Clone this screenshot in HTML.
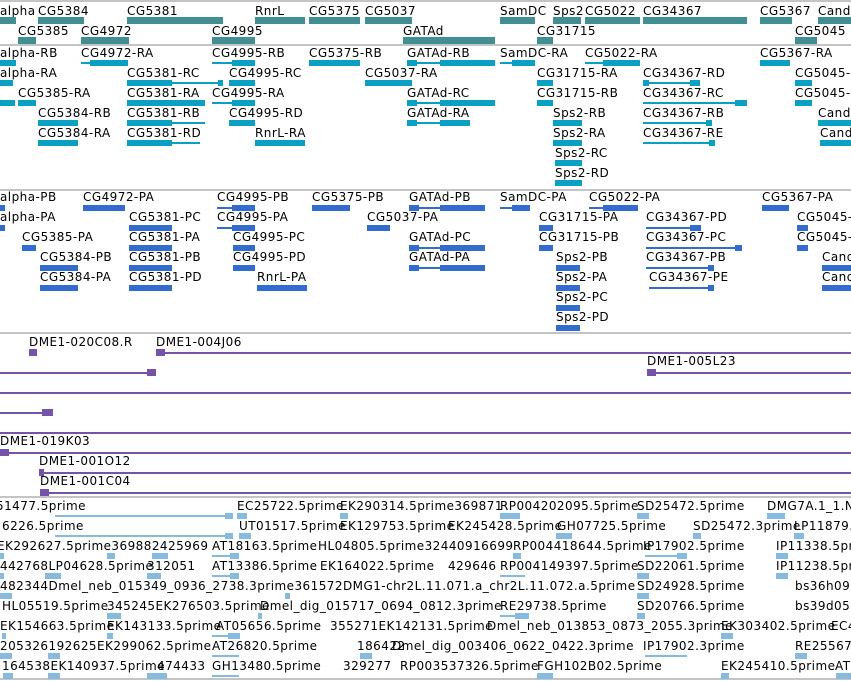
<!DOCTYPE html>
<html><head><meta charset="utf-8"><style>
html,body{margin:0;padding:0;background:#fff;width:851px;height:681px;overflow:hidden;position:relative}
.l{position:absolute;font-family:"DejaVu Sans","Liberation Sans",sans-serif;font-size:12px;letter-spacing:0.45px;line-height:14px;color:#000;white-space:nowrap}
.h{position:absolute;left:0;width:851px;height:2px;background:#c4c4c4}
.g{position:absolute;height:7px;background:#418e93}
.t{position:absolute;height:6px;background:#0aa0c2}
.tl{position:absolute;height:2px;background:#0aa0c2}
.p{position:absolute;height:6px;background:#336ccf}
.pl{position:absolute;height:2px;background:#336ccf}
.d{position:absolute;height:2px;background:#7453a9}
.dh{position:absolute;height:7px;width:9px;background:#7453a9}
.e{position:absolute;height:6px;background:#86bbdf}
.el{position:absolute;height:2px;background:#86bbdf}
</style></head><body>
<div class="h" style="top:0"></div>
<div class="h" style="top:44px"></div>
<div class="h" style="top:189px"></div>
<div class="h" style="top:332px"></div>
<div class="h" style="top:496px"></div>
<div class="h" style="top:678px"></div>

<!-- genes -->
<div class="l" style="left:0;top:4px">alpha</div><div class="g" style="left:0;top:17px;width:16px"></div>
<div class="l" style="left:38px;top:4px">CG5384</div><div class="g" style="left:38px;top:17px;width:46px"></div>
<div class="l" style="left:127px;top:4px">CG5381</div><div class="g" style="left:127px;top:17px;width:96px"></div>
<div class="l" style="left:255px;top:4px">RnrL</div><div class="g" style="left:255px;top:17px;width:50px"></div>
<div class="l" style="left:309px;top:4px">CG5375</div><div class="g" style="left:309px;top:17px;width:51px"></div>
<div class="l" style="left:365px;top:4px">CG5037</div><div class="g" style="left:365px;top:17px;width:47px"></div>
<div class="l" style="left:500px;top:4px">SamDC</div><div class="g" style="left:500px;top:17px;width:35px"></div>
<div class="l" style="left:553px;top:4px">Sps2</div><div class="g" style="left:553px;top:17px;width:28px"></div>
<div class="l" style="left:585px;top:4px">CG5022</div><div class="g" style="left:585px;top:17px;width:55px"></div>
<div class="l" style="left:643px;top:4px">CG34367</div><div class="g" style="left:643px;top:17px;width:104px"></div>
<div class="l" style="left:760px;top:4px">CG5367</div><div class="g" style="left:760px;top:17px;width:32px"></div>
<div class="l" style="left:818px;top:4px">Cand1</div><div class="g" style="left:818px;top:17px;width:33px"></div>
<div class="l" style="left:18px;top:24px">CG5385</div><div class="g" style="left:18px;top:37px;width:18px"></div>
<div class="l" style="left:81px;top:24px">CG4972</div><div class="g" style="left:81px;top:37px;width:48px"></div>
<div class="l" style="left:212px;top:24px">CG4995</div><div class="g" style="left:212px;top:37px;width:43px"></div>
<div class="l" style="left:403px;top:24px">GATAd</div><div class="g" style="left:403px;top:37px;width:92px"></div>
<div class="l" style="left:537px;top:24px">CG31715</div><div class="g" style="left:537px;top:37px;width:16px"></div>
<div class="l" style="left:795px;top:24px">CG5045</div><div class="g" style="left:795px;top:37px;width:22px"></div>

<!-- transcripts -->
<div class="l" style="left:0;top:46px">alpha-RB</div><div class="t" style="left:0;top:60px;width:16px"></div>
<div class="l" style="left:81px;top:46px">CG4972-RA</div><div class="tl" style="left:81px;top:62px;width:47px"></div><div class="t" style="left:90px;top:60px;width:38px"></div>
<div class="l" style="left:212px;top:46px">CG4995-RB</div><div class="tl" style="left:212px;top:62px;width:43px"></div><div class="t" style="left:232px;top:60px;width:23px"></div>
<div class="l" style="left:309px;top:46px">CG5375-RB</div><div class="t" style="left:309px;top:60px;width:51px"></div>
<div class="l" style="left:407px;top:46px">GATAd-RB</div><div class="tl" style="left:407px;top:62px;width:88px"></div><div class="t" style="left:407px;top:60px;width:10px"></div><div class="t" style="left:440px;top:60px;width:55px"></div>
<div class="l" style="left:500px;top:46px">SamDC-RA</div><div class="tl" style="left:500px;top:62px;width:35px"></div><div class="t" style="left:512px;top:60px;width:23px"></div>
<div class="l" style="left:585px;top:46px">CG5022-RA</div><div class="tl" style="left:585px;top:62px;width:55px"></div><div class="t" style="left:603px;top:60px;width:37px"></div>
<div class="l" style="left:760px;top:46px">CG5367-RA</div><div class="t" style="left:760px;top:60px;width:30px"></div>

<div class="l" style="left:0;top:66px">alpha-RA</div><div class="t" style="left:0;top:80px;width:13px"></div>
<div class="l" style="left:127px;top:66px">CG5381-RC</div><div class="tl" style="left:127px;top:82px;width:95px"></div><div class="t" style="left:127px;top:80px;width:45px"></div><div class="t" style="left:218px;top:80px;width:5px"></div>
<div class="l" style="left:229px;top:66px">CG4995-RC</div><div class="t" style="left:229px;top:80px;width:26px"></div>
<div class="l" style="left:365px;top:66px">CG5037-RA</div><div class="t" style="left:365px;top:80px;width:47px"></div>
<div class="l" style="left:537px;top:66px">CG31715-RA</div><div class="t" style="left:537px;top:80px;width:16px"></div>
<div class="l" style="left:643px;top:66px">CG34367-RD</div><div class="tl" style="left:643px;top:82px;width:57px"></div><div class="t" style="left:643px;top:80px;width:6px"></div><div class="t" style="left:690px;top:80px;width:10px"></div>
<div class="l" style="left:795px;top:66px">CG5045-RA</div><div class="t" style="left:795px;top:80px;width:17px"></div>

<div class="t" style="left:0;top:100px;width:15px"></div>
<div class="l" style="left:18px;top:86px">CG5385-RA</div><div class="t" style="left:18px;top:100px;width:18px"></div>
<div class="l" style="left:127px;top:86px">CG5381-RA</div><div class="t" style="left:127px;top:100px;width:78px"></div>
<div class="l" style="left:212px;top:86px">CG4995-RA</div><div class="tl" style="left:212px;top:102px;width:43px"></div><div class="t" style="left:232px;top:100px;width:23px"></div>
<div class="l" style="left:407px;top:86px">GATAd-RC</div><div class="tl" style="left:407px;top:102px;width:88px"></div><div class="t" style="left:407px;top:100px;width:10px"></div><div class="t" style="left:440px;top:100px;width:55px"></div>
<div class="l" style="left:537px;top:86px">CG31715-RB</div><div class="t" style="left:537px;top:100px;width:16px"></div>
<div class="l" style="left:643px;top:86px">CG34367-RC</div><div class="tl" style="left:643px;top:102px;width:104px"></div><div class="t" style="left:735px;top:100px;width:12px"></div>
<div class="l" style="left:795px;top:86px">CG5045-RB</div><div class="t" style="left:795px;top:100px;width:17px"></div>

<div class="l" style="left:38px;top:106px">CG5384-RB</div><div class="t" style="left:38px;top:120px;width:40px"></div>
<div class="l" style="left:127px;top:106px">CG5381-RB</div><div class="tl" style="left:127px;top:122px;width:78px"></div><div class="t" style="left:127px;top:120px;width:45px"></div>
<div class="l" style="left:229px;top:106px">CG4995-RD</div><div class="t" style="left:229px;top:120px;width:26px"></div>
<div class="l" style="left:407px;top:106px">GATAd-RA</div><div class="tl" style="left:407px;top:122px;width:63px"></div><div class="t" style="left:407px;top:120px;width:10px"></div><div class="t" style="left:440px;top:120px;width:30px"></div>
<div class="l" style="left:553px;top:106px">Sps2-RB</div><div class="t" style="left:553px;top:120px;width:29px"></div>
<div class="l" style="left:643px;top:106px">CG34367-RB</div><div class="tl" style="left:643px;top:122px;width:69px"></div><div class="t" style="left:706px;top:120px;width:6px"></div>
<div class="l" style="left:818px;top:106px">Cand1-RA</div><div class="t" style="left:818px;top:120px;width:33px"></div>

<div class="l" style="left:38px;top:126px">CG5384-RA</div><div class="t" style="left:38px;top:140px;width:40px"></div>
<div class="l" style="left:127px;top:126px">CG5381-RD</div><div class="tl" style="left:127px;top:142px;width:73px"></div><div class="t" style="left:127px;top:140px;width:45px"></div>
<div class="l" style="left:255px;top:126px">RnrL-RA</div><div class="t" style="left:255px;top:140px;width:50px"></div>
<div class="l" style="left:553px;top:126px">Sps2-RA</div><div class="t" style="left:553px;top:140px;width:29px"></div>
<div class="l" style="left:643px;top:126px">CG34367-RE</div><div class="tl" style="left:643px;top:142px;width:72px"></div><div class="t" style="left:709px;top:140px;width:6px"></div>
<div class="l" style="left:820px;top:126px">Cand1-RB</div><div class="t" style="left:820px;top:140px;width:31px"></div>
<div class="l" style="left:555px;top:146px">Sps2-RC</div><div class="t" style="left:555px;top:160px;width:27px"></div>
<div class="l" style="left:555px;top:166px">Sps2-RD</div><div class="t" style="left:555px;top:180px;width:27px"></div>

<!-- proteins -->
<div class="l" style="left:0;top:190px">alpha-PB</div><div class="p" style="left:0;top:205px;width:5px"></div>
<div class="l" style="left:83px;top:190px">CG4972-PA</div><div class="p" style="left:83px;top:205px;width:42px"></div>
<div class="l" style="left:217px;top:190px">CG4995-PB</div><div class="pl" style="left:217px;top:207px;width:38px"></div><div class="p" style="left:232px;top:205px;width:23px"></div>
<div class="l" style="left:312px;top:190px">CG5375-PB</div><div class="p" style="left:312px;top:205px;width:38px"></div>
<div class="l" style="left:409px;top:190px">GATAd-PB</div><div class="pl" style="left:409px;top:207px;width:76px"></div><div class="p" style="left:409px;top:205px;width:10px"></div><div class="p" style="left:440px;top:205px;width:45px"></div>
<div class="l" style="left:500px;top:190px">SamDC-PA</div><div class="pl" style="left:500px;top:207px;width:30px"></div><div class="p" style="left:512px;top:205px;width:18px"></div>
<div class="l" style="left:589px;top:190px">CG5022-PA</div><div class="pl" style="left:589px;top:207px;width:49px"></div><div class="p" style="left:603px;top:205px;width:35px"></div>
<div class="l" style="left:762px;top:190px">CG5367-PA</div><div class="p" style="left:762px;top:205px;width:27px"></div>

<div class="l" style="left:0;top:210px">alpha-PA</div><div class="p" style="left:0;top:225px;width:5px"></div>
<div class="l" style="left:129px;top:210px">CG5381-PC</div><div class="p" style="left:129px;top:225px;width:43px"></div>
<div class="l" style="left:217px;top:210px">CG4995-PA</div><div class="pl" style="left:217px;top:227px;width:38px"></div><div class="p" style="left:232px;top:225px;width:23px"></div>
<div class="l" style="left:367px;top:210px">CG5037-PA</div><div class="p" style="left:367px;top:225px;width:23px"></div>
<div class="l" style="left:539px;top:210px">CG31715-PA</div><div class="p" style="left:539px;top:225px;width:14px"></div>
<div class="l" style="left:646px;top:210px">CG34367-PD</div><div class="pl" style="left:646px;top:227px;width:55px"></div><div class="p" style="left:690px;top:225px;width:11px"></div>
<div class="l" style="left:797px;top:210px">CG5045-PA</div><div class="p" style="left:797px;top:225px;width:11px"></div>

<div class="l" style="left:22px;top:230px">CG5385-PA</div><div class="p" style="left:22px;top:245px;width:14px"></div>
<div class="l" style="left:129px;top:230px">CG5381-PA</div><div class="p" style="left:129px;top:245px;width:43px"></div>
<div class="l" style="left:233px;top:230px">CG4995-PC</div><div class="p" style="left:233px;top:245px;width:22px"></div>
<div class="l" style="left:409px;top:230px">GATAd-PC</div><div class="pl" style="left:409px;top:247px;width:76px"></div><div class="p" style="left:409px;top:245px;width:10px"></div><div class="p" style="left:440px;top:245px;width:45px"></div>
<div class="l" style="left:539px;top:230px">CG31715-PB</div><div class="p" style="left:539px;top:245px;width:14px"></div>
<div class="l" style="left:646px;top:230px">CG34367-PC</div><div class="pl" style="left:646px;top:247px;width:96px"></div><div class="p" style="left:735px;top:245px;width:7px"></div>
<div class="l" style="left:797px;top:230px">CG5045-PB</div><div class="p" style="left:797px;top:245px;width:11px"></div>

<div class="l" style="left:40px;top:250px">CG5384-PB</div><div class="p" style="left:40px;top:265px;width:38px"></div>
<div class="l" style="left:129px;top:250px">CG5381-PB</div><div class="p" style="left:129px;top:265px;width:43px"></div>
<div class="l" style="left:233px;top:250px">CG4995-PD</div><div class="p" style="left:233px;top:265px;width:22px"></div>
<div class="l" style="left:409px;top:250px">GATAd-PA</div><div class="pl" style="left:409px;top:267px;width:76px"></div><div class="p" style="left:409px;top:265px;width:10px"></div><div class="p" style="left:440px;top:265px;width:45px"></div>
<div class="l" style="left:556px;top:250px">Sps2-PB</div><div class="p" style="left:556px;top:265px;width:24px"></div>
<div class="l" style="left:646px;top:250px">CG34367-PB</div><div class="pl" style="left:646px;top:267px;width:68px"></div><div class="p" style="left:708px;top:265px;width:6px"></div>
<div class="l" style="left:822px;top:250px">Cand1-PA</div><div class="p" style="left:822px;top:265px;width:29px"></div>

<div class="l" style="left:40px;top:270px">CG5384-PA</div><div class="p" style="left:40px;top:285px;width:38px"></div>
<div class="l" style="left:129px;top:270px">CG5381-PD</div><div class="p" style="left:129px;top:285px;width:43px"></div>
<div class="l" style="left:257px;top:270px">RnrL-PA</div><div class="p" style="left:257px;top:285px;width:50px"></div>
<div class="l" style="left:556px;top:270px">Sps2-PA</div><div class="p" style="left:556px;top:285px;width:24px"></div>
<div class="l" style="left:649px;top:270px">CG34367-PE</div><div class="pl" style="left:649px;top:287px;width:65px"></div><div class="p" style="left:708px;top:285px;width:6px"></div>
<div class="l" style="left:822px;top:270px">Cand1-PB</div><div class="p" style="left:822px;top:285px;width:29px"></div>
<div class="l" style="left:556px;top:290px">Sps2-PC</div><div class="p" style="left:556px;top:305px;width:24px"></div>
<div class="l" style="left:556px;top:310px">Sps2-PD</div><div class="p" style="left:556px;top:325px;width:24px"></div>

<!-- DME -->
<div class="l" style="left:29px;top:335px">DME1-020C08.R</div><div class="dh" style="left:29px;top:349px;width:8px"></div>
<div class="l" style="left:156px;top:335px">DME1-004J06</div><div class="dh" style="left:156px;top:349px"></div><div class="d" style="left:160px;top:352px;width:691px"></div>
<div class="d" style="left:0;top:372px;width:150px"></div><div class="dh" style="left:147px;top:369px"></div>
<div class="l" style="left:647px;top:354px">DME1-005L23</div><div class="dh" style="left:647px;top:369px"></div><div class="d" style="left:650px;top:372px;width:201px"></div>
<div class="d" style="left:0;top:392px;width:851px"></div>
<div class="d" style="left:0;top:412px;width:45px"></div><div class="dh" style="left:42px;top:409px;width:11px"></div>
<div class="d" style="left:0;top:432px;width:851px"></div>
<div class="l" style="left:0;top:434px">DME1-019K03</div><div class="dh" style="left:0;top:449px"></div><div class="d" style="left:0;top:452px;width:851px"></div>
<div class="l" style="left:39px;top:454px">DME1-001O12</div><div class="dh" style="left:39px;top:469px;width:5px"></div><div class="d" style="left:39px;top:472px;width:812px"></div>
<div class="l" style="left:40px;top:474px">DME1-001C04</div><div class="dh" style="left:40px;top:489px"></div><div class="d" style="left:40px;top:492px;width:811px"></div>

<!-- ESTs -->
<div class="l" style="left:-4px;top:499px">51477.5prime</div>
<div class="l" style="left:237px;top:499px">EC25722.5prime</div>
<div class="l" style="left:340px;top:499px">EK290314.5prime369871</div>
<div class="l" style="left:500px;top:499px">RP004202095.5prime</div>
<div class="l" style="left:637px;top:499px">SD25472.5prime</div>
<div class="l" style="left:767px;top:499px">DMG7A.1_1.N</div>
<div class="el" style="left:55px;top:515px;width:178px"></div><div class="e" style="left:225px;top:513px;width:8px"></div><div class="e" style="left:237px;top:513px;width:10px"></div><div class="e" style="left:500px;top:513px;width:20px"></div><div class="e" style="left:637px;top:513px;width:12px"></div><div class="e" style="left:767px;top:513px;width:18px"></div><div class="e" style="left:340px;top:513px;width:8px"></div>

<div class="l" style="left:2px;top:519px">6226.5prime</div>
<div class="l" style="left:239px;top:519px">UT01517.5prime</div>
<div class="l" style="left:340px;top:519px">EK129753.5prime</div>
<div class="l" style="left:448px;top:519px">EK245428.5prime</div>
<div class="l" style="left:557px;top:519px">GH07725.5prime</div>
<div class="l" style="left:693px;top:519px">SD25472.3prime</div>
<div class="l" style="left:794px;top:519px">LP11879.</div>
<div class="el" style="left:55px;top:535px;width:178px"></div><div class="e" style="left:225px;top:533px;width:8px"></div><div class="e" style="left:239px;top:533px;width:12px"></div><div class="e" style="left:556px;top:533px;width:16px"></div><div class="e" style="left:693px;top:533px;width:8px"></div><div class="e" style="left:794px;top:533px;width:10px"></div>

<div class="l" style="left:-3px;top:539px">EK292627.5prime369882425969</div>
<div class="l" style="left:212px;top:539px">AT18163.5prime</div>
<div class="l" style="left:318px;top:539px">HL04805.5prime32440916699</div>
<div class="l" style="left:513px;top:539px">RP004418644.5prime</div>
<div class="l" style="left:643px;top:539px">IP17902.5prime</div>
<div class="l" style="left:776px;top:539px">IP11338.5pr</div>
<div class="e" style="left:0;top:553px;width:4px"></div><div class="e" style="left:107px;top:553px;width:8px"></div><div class="e" style="left:152px;top:553px;width:16px"></div><div class="el" style="left:212px;top:555px;width:27px"></div><div class="e" style="left:230px;top:553px;width:9px"></div><div class="el" style="left:645px;top:555px;width:42px"></div><div class="e" style="left:677px;top:553px;width:10px"></div><div class="e" style="left:776px;top:553px;width:12px"></div><div class="e" style="left:513px;top:553px;width:8px"></div>

<div class="l" style="left:0;top:559px">442768LP04628.5prime</div>
<div class="l" style="left:147px;top:559px">312051</div>
<div class="l" style="left:212px;top:559px">AT13386.5prime</div>
<div class="l" style="left:320px;top:559px">EK164022.5prime</div>
<div class="l" style="left:448px;top:559px">429646</div>
<div class="l" style="left:500px;top:559px">RP004149397.5prime</div>
<div class="l" style="left:637px;top:559px">SD22061.5prime</div>
<div class="l" style="left:776px;top:559px">IP11238.5pr</div>
<div class="e" style="left:0;top:573px;width:4px"></div><div class="e" style="left:45px;top:573px;width:16px"></div><div class="e" style="left:147px;top:573px;width:14px"></div><div class="el" style="left:212px;top:575px;width:27px"></div><div class="e" style="left:230px;top:573px;width:9px"></div><div class="el" style="left:500px;top:575px;width:25px"></div><div class="e" style="left:637px;top:573px;width:12px"></div><div class="e" style="left:776px;top:573px;width:12px"></div>

<div class="l" style="left:0;top:579px">482344Dmel_neb_015349_0936_2738.3prime361572DMG1-chr2L.11.071.a_chr2L.11.072.a.5prime</div>
<div class="l" style="left:637px;top:579px">SD24928.5prime</div>
<div class="l" style="left:795px;top:579px">bs36h09.</div>
<div class="e" style="left:0;top:593px;width:12px"></div><div class="e" style="left:285px;top:593px;width:5px"></div><div class="e" style="left:637px;top:593px;width:12px"></div>

<div class="l" style="left:2px;top:599px">HL05519.5prime</div>
<div class="l" style="left:107px;top:599px">345245EK276503.5prime</div>
<div class="l" style="left:260px;top:599px">Dmel_dig_015717_0694_0812.3prime</div>
<div class="l" style="left:500px;top:599px">RE29738.5prime</div>
<div class="l" style="left:637px;top:599px">SD20766.5prime</div>
<div class="l" style="left:795px;top:599px">bs39d05.</div>
<div class="e" style="left:107px;top:613px;width:14px"></div><div class="e" style="left:258px;top:613px;width:4px"></div><div class="el" style="left:500px;top:615px;width:28px"></div><div class="e" style="left:515px;top:613px;width:14px"></div><div class="e" style="left:637px;top:613px;width:8px"></div>

<div class="l" style="left:0;top:619px">EK154663.5prime</div>
<div class="l" style="left:107px;top:619px">EK143133.5prime</div>
<div class="l" style="left:216px;top:619px">AT05656.5prime</div>
<div class="l" style="left:330px;top:619px">355271EK142131.5prime</div>
<div class="l" style="left:487px;top:619px">Dmel_neb_013853_0873_2055.3prime</div>
<div class="l" style="left:721px;top:619px">EK303402.5prime</div>
<div class="l" style="left:831px;top:619px">EC4</div>
<div class="e" style="left:2px;top:633px;width:4px"></div><div class="e" style="left:107px;top:633px;width:6px"></div><div class="el" style="left:212px;top:635px;width:28px"></div><div class="e" style="left:228px;top:633px;width:12px"></div><div class="e" style="left:721px;top:633px;width:12px"></div>

<div class="l" style="left:0;top:639px">205326192625EK299062.5prime</div>
<div class="l" style="left:212px;top:639px">AT26820.5prime</div>
<div class="l" style="left:357px;top:639px">186422</div>
<div class="l" style="left:392px;top:639px">Dmel_dig_003406_0622_0422.3prime</div>
<div class="l" style="left:643px;top:639px">IP17902.3prime</div>
<div class="l" style="left:795px;top:639px">RE25567</div>
<div class="e" style="left:0;top:653px;width:12px"></div><div class="e" style="left:48px;top:653px;width:12px"></div><div class="el" style="left:212px;top:655px;width:27px"></div><div class="el" style="left:645px;top:655px;width:42px"></div><div class="e" style="left:795px;top:653px;width:12px"></div><div class="e" style="left:360px;top:653px;width:12px"></div>

<div class="l" style="left:2px;top:659px">164538EK140937.5prime</div>
<div class="l" style="left:157px;top:659px">474433</div>
<div class="l" style="left:212px;top:659px">GH13480.5prime</div>
<div class="l" style="left:343px;top:659px">329277</div>
<div class="l" style="left:400px;top:659px">RP003537326.5prime</div>
<div class="l" style="left:537px;top:659px">FGH102B02.5prime</div>
<div class="l" style="left:721px;top:659px">EK245410.5prime</div>
<div class="l" style="left:835px;top:659px">AT</div>
<div class="e" style="left:3px;top:673px;width:10px"></div><div class="e" style="left:48px;top:673px;width:12px"></div><div class="e" style="left:147px;top:673px;width:20px"></div><div class="el" style="left:212px;top:675px;width:27px"></div><div class="e" style="left:537px;top:673px;width:16px"></div><div class="e" style="left:721px;top:673px;width:8px"></div><div class="e" style="left:836px;top:673px;width:15px"></div>
</body></html>
